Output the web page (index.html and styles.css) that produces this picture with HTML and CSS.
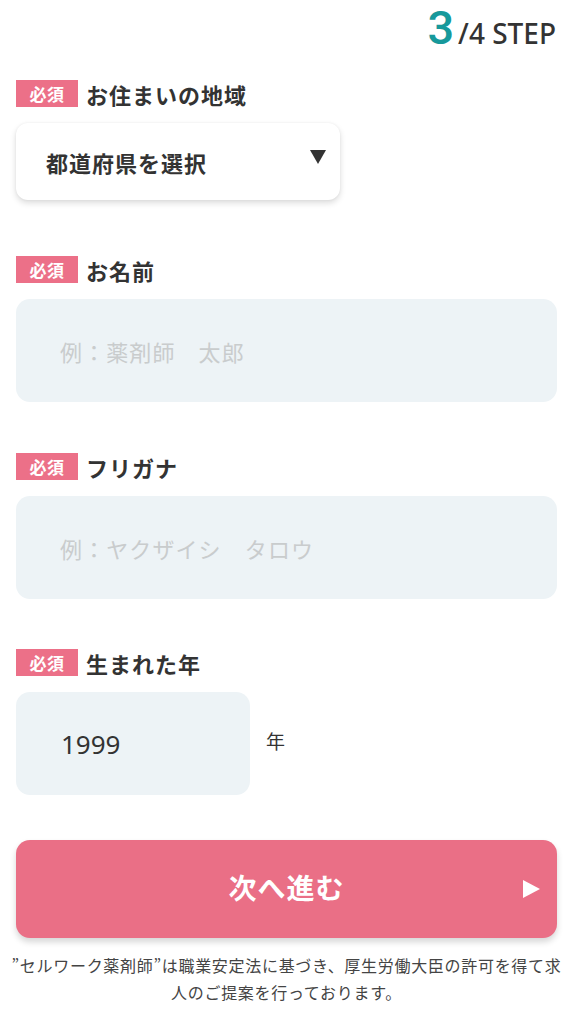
FILE: index.html
```html
<!DOCTYPE html>
<html lang="ja">
<head>
<meta charset="utf-8">
<link rel="stylesheet" href="styles.css">
</head>
<body>
<div class="page">
  <div class="step"><span class="step-num">3</span><span class="step-total">/4 STEP</span></div>

  <div class="field field-pref">
    <div class="label"><span class="badge">必須</span><span class="label-text">お住まいの地域</span></div>
    <div class="select"><span>都道府県を選択</span><span class="tri-down"></span></div>
  </div>

  <div class="field field-name">
    <div class="label"><span class="badge">必須</span><span class="label-text">お名前</span></div>
    <div class="input placeholder">例：薬剤師　太郎</div>
  </div>

  <div class="field field-kana">
    <div class="label"><span class="badge">必須</span><span class="label-text">フリガナ</span></div>
    <div class="input placeholder">例：ヤクザイシ　タロウ</div>
  </div>

  <div class="field field-year">
    <div class="label"><span class="badge">必須</span><span class="label-text">生まれた年</span></div>
    <div class="year-row">
      <div class="input year-input">1999</div>
      <span class="year-unit">年</span>
    </div>
  </div>

  <button class="next">次へ進む<span class="tri-right"></span></button>

  <p class="note">”セルワーク薬剤師”は職業安定法に基づき、厚生労働大臣の許可を得て求人のご提案を行っております。</p>
</div>
</body>
</html>
```

FILE: styles.css
```css
* { box-sizing: border-box; }
html, body { margin: 0; padding: 0; background: #fff; }
body {
  font-family: "Noto Sans CJK JP", "Noto Sans", sans-serif;
  color: #333;
}
.page {
  width: 570px;
  padding: 0 13px 0 16px;
  display: flex;
  flex-direction: column;
}
.step {
  display: flex;
  justify-content: flex-end;
  align-items: baseline;
  height: 80px;
  padding-right: 1px;
}
.step-num {
  font-family: "Roboto", sans-serif;
  font-size: 47px;
  line-height: 55px;
  font-weight: 500;
  color: #17999b;
  margin-right: 4px;
}
.step-total {
  font-family: "Noto Sans", sans-serif;
  font-size: 28px;
  line-height: 38px;
  font-weight: 500;
  color: #333;
}
.field { display: flex; flex-direction: column; }
.label {
  display: flex;
  align-items: center;
  height: 27px;
  margin-bottom: 16px;
}
.badge {
  background: #ec7088;
  color: #fff;
  font-size: 17px;
  font-weight: 700;
  width: 62px;
  height: 27px;
  display: flex;
  align-items: center;
  justify-content: center;
  margin-right: 8px;
  letter-spacing: 0.5px;
}
.label-text {
  font-size: 22px;
  font-weight: 700;
  letter-spacing: 1px;
  color: #333;
}
.select {
  width: 324px;
  height: 77px;
  background: #fff;
  border-radius: 12px;
  box-shadow: 0 3px 6px rgba(0,0,0,0.14), 0 0 3px rgba(0,0,0,0.05);
  display: flex;
  align-items: center;
  justify-content: space-between;
  padding: 0 14px 0 30px;
  font-size: 22px;
  font-weight: 700;
  letter-spacing: 1px;
  color: #333;
}
.tri-down {
  width: 0; height: 0;
  border-left: 8px solid transparent;
  border-right: 8px solid transparent;
  border-top: 14px solid #333;
  margin-top: -10px;
}
.field-pref { margin-bottom: 56px; }
.field-name { margin-bottom: 51px; }
.field-kana { margin-bottom: 50px; }
.field-year { margin-bottom: 45px; }
.input {
  height: 103px;
  background: #edf3f6;
  border-radius: 14px;
  display: flex;
  align-items: center;
  padding-left: 44px;
  font-size: 22px;
  letter-spacing: 1.1px;
}
.placeholder { color: #c9cccd; }
.year-row { display: flex; align-items: center; }
.year-input {
  width: 234px;
  padding-left: 45px;
  font-family: "Noto Sans", sans-serif;
  font-size: 26px;
  font-weight: 400;
  letter-spacing: 0;
  color: #333;
}
.year-unit {
  margin-left: 16px;
  font-size: 19px;
  color: #333;
  margin-top: -6px;
}
.next {
  position: relative;
  height: 98px;
  border: none;
  border-radius: 14px;
  background: #ea6f86;
  color: #fff;
  font-family: "Noto Sans CJK JP", sans-serif;
  font-size: 28px;
  font-weight: 700;
  letter-spacing: 1px;
  box-shadow: 0 4px 6px rgba(0,0,0,0.16);
  display: flex;
  align-items: center;
  justify-content: center;
  padding: 0 0 4px;
}
.tri-right {
  position: absolute;
  right: 17px;
  top: 40px;
  width: 0; height: 0;
  border-top: 9px solid transparent;
  border-bottom: 9px solid transparent;
  border-left: 17px solid #fff;
}
.note {
  margin: 14px -8px 0 -8px;
  text-align: center;
  font-size: 16px;
  line-height: 27px;
  letter-spacing: 0.7px;
  color: #444;
}
```
